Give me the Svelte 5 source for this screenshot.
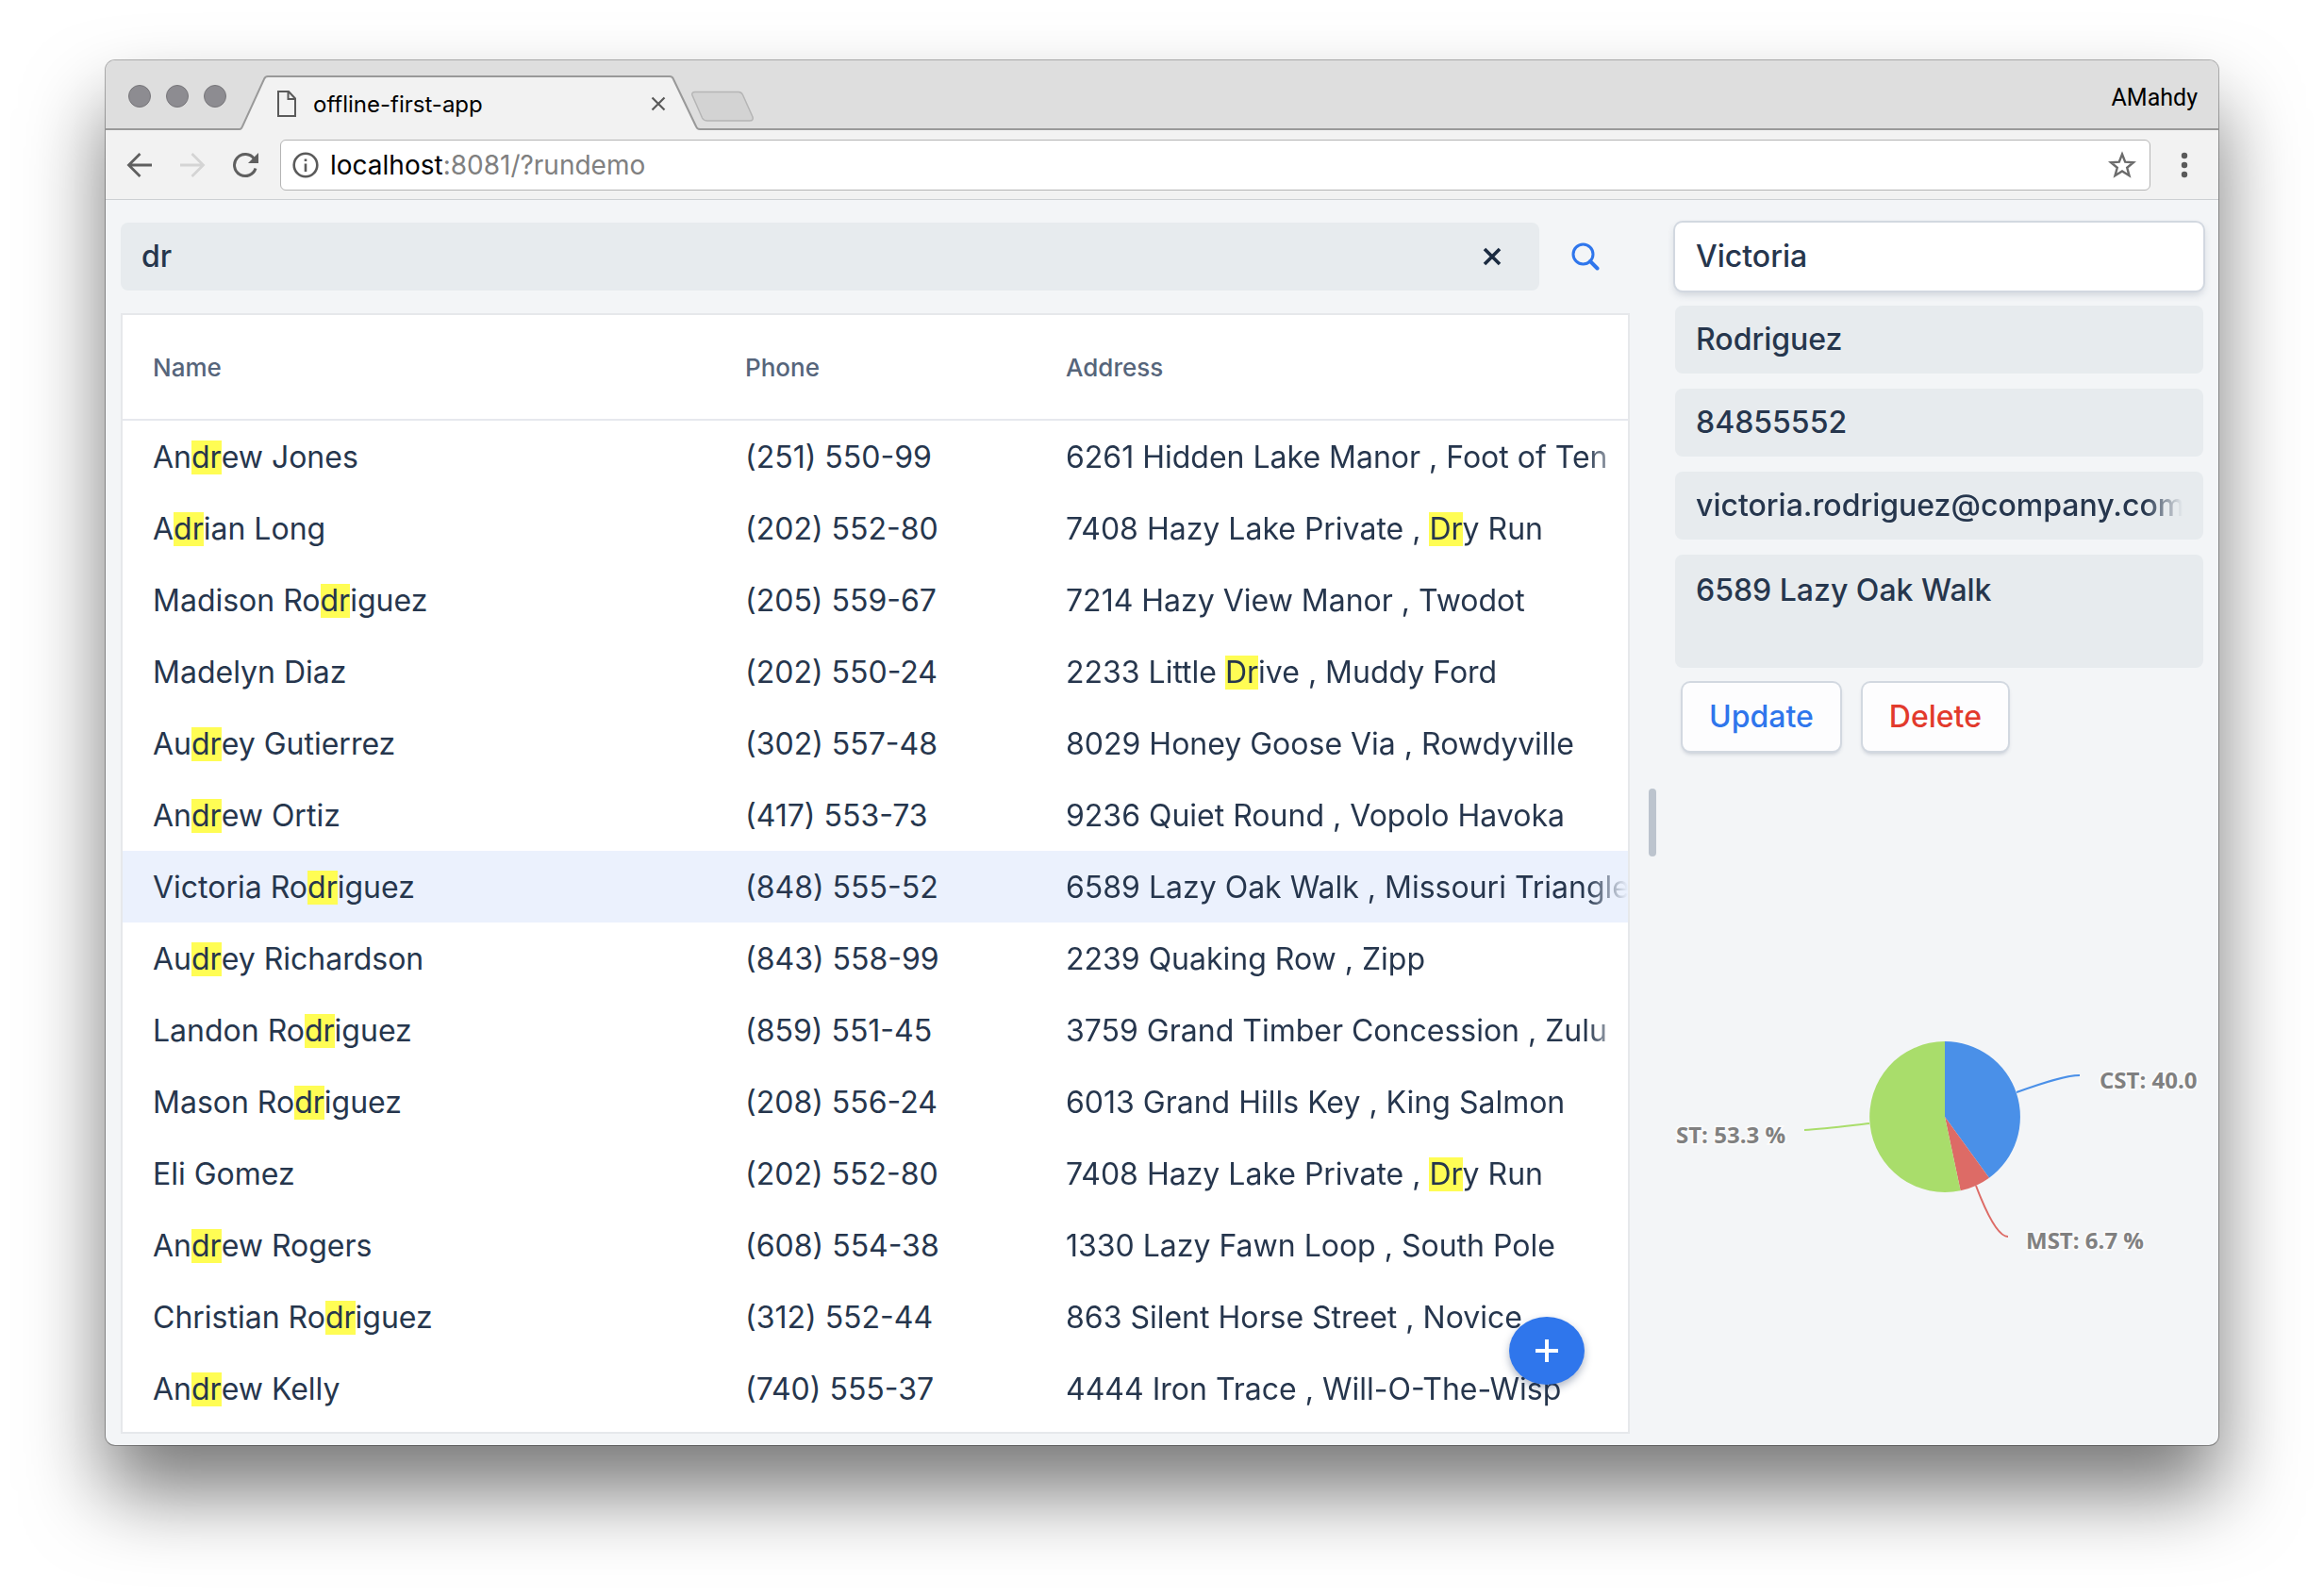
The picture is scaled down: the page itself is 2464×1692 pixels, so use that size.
<script>
  const contacts = [
    ['Andrew Jones', '(251) 550-99', '6261 Hidden Lake Manor , Foot of Ten'],
    ['Adrian Long', '(202) 552-80', '7408 Hazy Lake Private , Dry Run'],
    ['Madison Rodriguez', '(205) 559-67', '7214 Hazy View Manor , Twodot'],
    ['Madelyn Diaz', '(202) 550-24', '2233 Little Drive , Muddy Ford'],
    ['Audrey Gutierrez', '(302) 557-48', '8029 Honey Goose Via , Rowdyville'],
    ['Andrew Ortiz', '(417) 553-73', '9236 Quiet Round , Vopolo Havoka'],
    ['Victoria Rodriguez', '(848) 555-52', '6589 Lazy Oak Walk , Missouri Triangle'],
    ['Audrey Richardson', '(843) 558-99', '2239 Quaking Row , Zipp'],
    ['Landon Rodriguez', '(859) 551-45', '3759 Grand Timber Concession , Zulu'],
    ['Mason Rodriguez', '(208) 556-24', '6013 Grand Hills Key , King Salmon'],
    ['Eli Gomez', '(202) 552-80', '7408 Hazy Lake Private , Dry Run'],
    ['Andrew Rogers', '(608) 554-38', '1330 Lazy Fawn Loop , South Pole'],
    ['Christian Rodriguez', '(312) 552-44', '863 Silent Horse Street , Novice'],
    ['Andrew Kelly', '(740) 555-37', '4444 Iron Trace , Will-O-The-Wisp']
  ];

  let query = $state('dr');
  let selected = $state(6);
  let first = $state('Victoria');
  let last = $state('Rodriguez');
  let phone = $state('84855552');
  let email = $state('victoria.rodriguez@company.com');
  let address = $state('6589 Lazy Oak Walk');

  // Splits a text into plain and matching pieces, so that matches can be marked.
  function pieces(text) {
    if (!query) return [{ text, hit: false }];
    const out = [];
    const low = text.toLowerCase();
    const q = query.toLowerCase();
    let at = 0;
    for (let i = low.indexOf(q); i >= 0; i = low.indexOf(q, at)) {
      if (i > at) out.push({ text: text.slice(at, i), hit: false });
      out.push({ text: text.slice(i, i + q.length), hit: true });
      at = i + q.length;
    }
    if (at < text.length) out.push({ text: text.slice(at), hit: false });
    return out;
  }
</script>

{#snippet marked(text)}{#each pieces(text) as p}{#if p.hit}<mark>{p.text}</mark>{:else}{p.text}{/if}{/each}{/snippet}

<div class="desktop">
  <div class="window">
    <header class="tabstrip">
      <div class="lights"><i></i><i></i><i></i></div>
      <div class="tab">
        <svg class="tab-shape" viewBox="0 0 488 58" preserveAspectRatio="none" aria-hidden="true">
          <path d="M0 57 Q2 57 3 54 L26 4 Q27 1 30 1 H456 Q459 1 460 4 L484 54 Q485 57 488 57 V58 H0Z" fill="#f2f2f2" />
          <path d="M0 57 Q2 57 3 54 L26 4 Q27 1 30 1 H456 Q459 1 460 4 L484 54 Q485 57 488 57" fill="none" stroke="#999" stroke-width="2" />
        </svg>
        <svg class="file" viewBox="0 0 20 28" width="20" height="28" aria-hidden="true">
          <path d="M1 1H12L19 8.500V27H1ZM11.500 1V9H19" fill="none" stroke="#5a5a5a" stroke-width="2" />
        </svg>
        <span class="tab-title">offline-first-app</span>
        <button class="plain tab-close" aria-label="Close tab">
          <svg viewBox="0 0 16 16" width="16" height="16"><path d="M1.500 1.500 14.500 14.500M14.500 1.500 1.500 14.500" stroke="#5a5a5a" stroke-width="2.200" /></svg>
        </button>
      </div>
      <button class="plain new-tab" aria-label="New tab">
        <svg viewBox="0 0 68 34" width="68" height="34"><path d="M5 1.500H51Q54 1.500 55.500 4.500L66 28Q67 32 63 32H18Q14 32 12.500 29L2 5Q1 1.500 5 1.500Z" fill="#d3d3d3" stroke="#b5b5b5" stroke-width="1.500" /></svg>
      </button>
      <span class="profile">AMahdy</span>
    </header>

    <nav class="toolbar">
      <button class="plain" aria-label="Back">
        <svg viewBox="0 0 28 28" width="28" height="28"><path d="M27 14H3M14.500 2 2.500 14 14.500 26" fill="none" stroke="#5f5f5f" stroke-width="2.800" /></svg>
      </button>
      <button class="plain" aria-label="Forward">
        <svg viewBox="0 0 28 28" width="28" height="28"><path d="M1 14H25M13.500 2 25.500 14 13.500 26" fill="none" stroke="#d4d4d4" stroke-width="2.800" /></svg>
      </button>
      <button class="plain" aria-label="Reload">
        <svg viewBox="0 0 28 28" width="28" height="28"><path d="M23.500 7.500A11.500 11.500 0 1 0 25 17.500" fill="none" stroke="#5f5f5f" stroke-width="3" /><path d="M28 1V12H17Z" fill="#5f5f5f" /></svg>
      </button>
      <div class="omnibox">
        <svg viewBox="0 0 28 28" width="28" height="28" aria-hidden="true"><circle cx="14" cy="14" r="12.300" fill="none" stroke="#5a5a5a" stroke-width="2.600" /><path d="M14 12.500V21M14 7.500V10" stroke="#5a5a5a" stroke-width="2.600" /></svg>
        <div class="url" role="textbox" tabindex="0" aria-label="Address" contenteditable="true"><span class="host">localhost</span>:8081/?rundemo</div>
        <button class="plain" aria-label="Bookmark">
          <svg viewBox="0 0 30 30" width="30" height="30"><path d="M15 3.500 18.200 11.600 27 12.200 20.200 17.700 22.500 26.200 15 21.500 7.500 26.200 9.800 17.700 3 12.200 11.800 11.600Z" fill="none" stroke="#6b6b6b" stroke-width="2.400" /></svg>
        </button>
      </div>
      <button class="plain menu" aria-label="Menu">
        <svg viewBox="0 0 8 28" width="8" height="28"><circle cx="4" cy="4" r="3.200" fill="#5a5a5a" /><circle cx="4" cy="14" r="3.200" fill="#5a5a5a" /><circle cx="4" cy="24" r="3.200" fill="#5a5a5a" /></svg>
      </button>
    </nav>

    <main class="app">
      <section class="list">
        <div class="search">
          <div class="field grow">
            <input aria-label="Search contacts" bind:value={query} />
            <button class="plain" aria-label="Clear" onclick={() => (query = '')}>
              <svg viewBox="0 0 20 20" width="20" height="20"><path d="M2 2 18 18M18 2 2 18" stroke="#1b2b41" stroke-width="3.600" /></svg>
            </button>
          </div>
          <button class="plain" aria-label="Search">
            <svg viewBox="0 0 30 30" width="30" height="30"><circle cx="12.500" cy="12.500" r="10.500" fill="none" stroke="#2f76ec" stroke-width="3" /><path d="M20 20 27.500 27.500" stroke="#2f76ec" stroke-width="4" stroke-linecap="round" /></svg>
          </button>
        </div>

        <div class="grid">
          <table>
            <colgroup><col class="c-name" /><col class="c-phone" /><col /></colgroup>
            <thead>
              <tr><th>Name</th><th>Phone</th><th>Address</th></tr>
            </thead>
            <tbody>
              {#each contacts as [name, tel, place], i}
                <tr class:selected={i === selected} onclick={() => (selected = i)}>
                  <td>{@render marked(name)}</td>
                  <td>{tel}</td>
                  <td class="place"><div class="fade">{@render marked(place)}</div></td>
                </tr>
              {/each}
            </tbody>
          </table>
          <button class="fab" aria-label="Add contact">
            <svg viewBox="0 0 24 24" width="24" height="24"><path d="M12 0V24M0 12H24" stroke="#fff" stroke-width="4" /></svg>
          </button>
        </div>
      </section>

      <div class="splitter"><span></span></div>

      <aside class="detail">
        <form onsubmit={(e) => e.preventDefault()}>
          <div class="field active"><input aria-label="First name" bind:value={first} /></div>
          <div class="field"><input aria-label="Last name" bind:value={last} /></div>
          <div class="field"><input aria-label="Phone" bind:value={phone} /></div>
          <div class="field"><input class="long" aria-label="Email" bind:value={email} /></div>
          <div class="field area"><textarea aria-label="Address" rows="2" bind:value={address}></textarea></div>
          <div class="actions">
            <button class="action">Update</button>
            <button class="action danger" type="button">Delete</button>
          </div>
        </form>

        <svg class="chart" viewBox="0 0 560 260" role="img" aria-label="Contacts by time zone">
          <path d="M286 120V40A80 80 0 0 1 333 184.700Z" fill="#4a90e8" />
          <path d="M286 120 333 184.700A80 80 0 0 1 302.600 198.300Z" fill="#dd6b66" />
          <path d="M286 120 302.600 198.300A80 80 0 1 1 286 40Z" fill="#a9dd6b" />
          <g fill="none" stroke-width="2">
            <path d="M362 94C390 84 414 76 429 76" stroke="#4a90e8" />
            <path d="M206 127C180 130 158 133 137 134" stroke="#a9dd6b" />
            <path d="M319 193C330 222 342 247 353 247" stroke="#dd6b66" />
          </g>
          <g class="labels">
            <text x="450" y="90">CST: 40.0</text>
            <text x="1" y="148">ST: 53.3 %</text>
            <text x="372" y="260">MST: 6.7 %</text>
          </g>
        </svg>
      </aside>
    </main>
  </div>
</div>

<style>
  :global(body) {
    margin: 0;
    background: #fff;
  }
  * {
    box-sizing: border-box;
  }
  .desktop {
    padding: 64px 112px 160px;
    overflow: hidden;
    font-family: Inter, 'Liberation Sans', sans-serif;
    font-size: 32px;
    color: #26364d;
  }
  svg {
    display: block;
    flex: none;
  }
  .plain {
    display: block;
    padding: 0;
    border: 0;
    background: none;
    cursor: pointer;
  }
  .window {
    border-radius: 10px;
    background: #f3f5f7;
    box-shadow:
      0 0 0 1px rgba(0, 0, 0, 0.3),
      0 50px 84px rgba(0, 0, 0, 0.53);
  }

  .tabstrip {
    display: flex;
    align-items: flex-end;
    height: 74px;
    border-radius: 10px 10px 0 0;
    background: #dedede;
    box-shadow: inset 0 -2px #999;
  }
  .lights {
    display: flex;
    align-self: center;
    gap: 16px;
    padding: 2px 14px 0 24px;
  }
  .lights i {
    width: 24px;
    height: 24px;
    border: 1px solid #77767a;
    border-radius: 50%;
    background: #8d8c91;
  }
  .tab {
    position: relative;
    display: flex;
    align-items: center;
    width: 488px;
    height: 58px;
    padding: 2px 36px 0 40px;
  }
  .tab-shape {
    position: absolute;
    inset: 0;
    width: 100%;
    height: 100%;
  }
  .file {
    position: relative;
  }
  .tab-title {
    position: relative;
    flex: 1;
    padding-left: 18px;
    font-size: 24px;
    color: #000;
  }
  .tab-close {
    position: relative;
  }
  .new-tab {
    margin: 0 0 8px -10px;
  }
  .profile {
    align-self: center;
    margin-left: auto;
    padding: 4px 22px 0 0;
    font-family: Roboto, sans-serif;
    font-size: 25px;
    color: #000;
  }

  .toolbar {
    display: flex;
    align-items: center;
    gap: 28px;
    height: 74px;
    padding: 0 32px 0 22px;
    border-bottom: 1px solid #cdd0d3;
    background: #f2f2f2;
  }
  .omnibox {
    display: flex;
    flex: 1;
    align-items: center;
    gap: 12px;
    height: 54px;
    margin-left: -5px;
    padding: 0 14px 0 12px;
    border: 1px solid #b4b4b4;
    border-radius: 6px;
    background: #fff;
  }
  .url {
    flex: 1;
    font-size: 28px;
    color: #808080;
    outline: 0;
  }
  .host {
    color: #000;
  }
  .menu {
    margin-left: 4px;
  }

  .app {
    display: flex;
    padding: 24px 16px 12px;
  }
  .list {
    flex: 1;
    min-width: 0;
  }
  .search {
    display: flex;
    align-items: center;
    gap: 34px;
    padding-right: 32px;
  }
  .field {
    display: flex;
    align-items: center;
    height: 72px;
    padding: 0 22px;
    border-radius: 8px;
    background: #e7ebee;
  }
  .grow {
    flex: 1;
    padding-right: 40px;
  }
  .field input,
  .field textarea {
    flex: 1;
    min-width: 0;
    width: 100%;
    padding: 0;
    border: 0;
    outline: 0;
    resize: none;
    overflow: hidden;
    background: transparent;
    font: 500 32px/44px Inter, 'Liberation Sans', sans-serif;
    color: #26364d;
  }
  .field .long {
    mask-image: linear-gradient(to left, transparent, #000 40px);
  }
  .field.active {
    background: #fff;
    box-shadow:
      0 0 0 2px #d2d8e0,
      0 4px 8px rgba(40, 60, 90, 0.2);
  }
  .field.area {
    height: 120px;
    align-items: flex-start;
    padding-top: 16px;
  }

  .grid {
    position: relative;
    margin-top: 24px;
    padding-bottom: 8px;
    border: 2px solid #e6e8eb;
    background: #fff;
  }
  table {
    width: 100%;
    table-layout: fixed;
    border-spacing: 0;
  }
  .c-name {
    width: 628px;
  }
  .c-phone {
    width: 340px;
  }
  th {
    height: 112px;
    padding: 0 32px;
    border-bottom: 2px solid #e6e8ee;
    text-align: left;
    font-size: 26px;
    font-weight: 500;
    color: #56657b;
  }
  td {
    height: 76px;
    padding: 0 32px;
    white-space: nowrap;
  }
  td.place {
    padding-right: 0;
  }
  .fade {
    overflow: hidden;
    mask-image: linear-gradient(to left, transparent, #000 44px);
  }
  .selected td {
    background: #ebf1fd;
  }
  mark {
    display: inline-block;
    line-height: 36px;
    background: #fffd54;
    color: inherit;
  }
  .fab {
    position: absolute;
    right: 46px;
    bottom: 50px;
    display: grid;
    place-items: center;
    width: 80px;
    height: 72px;
    padding: 0;
    border: 0;
    border-radius: 50%;
    background: #2f76ec;
    box-shadow: 0 4px 8px rgba(30, 50, 90, 0.35);
  }

  .splitter {
    display: flex;
    align-items: center;
    justify-content: center;
    width: 48px;
    padding-bottom: 12px;
  }
  .splitter span {
    width: 8px;
    height: 72px;
    border-radius: 4px;
    background: #bcc4ce;
  }
  .detail {
    display: flex;
    flex-direction: column;
    width: 560px;
  }
  form {
    display: flex;
    flex-direction: column;
    gap: 16px;
  }
  .actions {
    display: flex;
    gap: 24px;
    padding: 0 8px;
  }
  .action {
    height: 72px;
    padding: 0 28px;
    border: 0;
    border-radius: 8px;
    background: #fdfdfe;
    box-shadow:
      0 0 0 2px #d2d8e0,
      0 3px 4px rgba(40, 60, 90, 0.25);
    font: 500 32px/36px Inter, 'Liberation Sans', sans-serif;
    color: #2f76ec;
  }
  .danger {
    color: #e23a2c;
  }
  .chart {
    width: 100%;
    margin-top: 268px;
    overflow: visible;
  }
  .labels text {
    font: 700 24px 'Open Sans', sans-serif;
    fill: #808080;
    stroke: #fafafa;
    stroke-width: 4px;
    paint-order: stroke;
  }
</style>
